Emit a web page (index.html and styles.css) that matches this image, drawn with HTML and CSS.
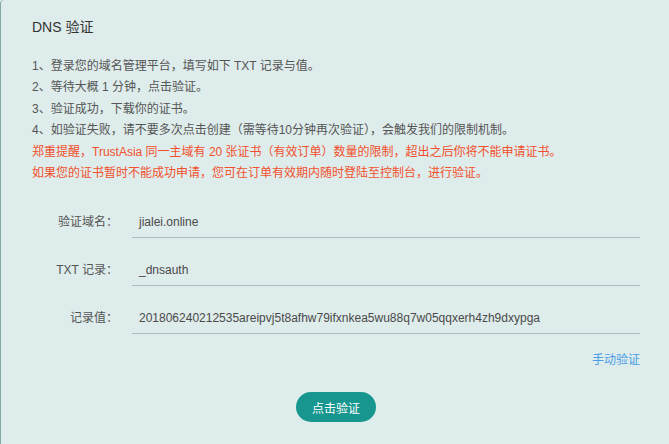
FILE: index.html
```html
<!DOCTYPE html>
<html lang="zh-CN">
<head>
<meta charset="utf-8">
<title>DNS 验证</title>
<link rel="stylesheet" href="styles.css">
</head>
<body>
<div class="panel">
  <h2 class="title">DNS 验证</h2>
  <div class="notes">
    <p>1、登录您的域名管理平台，填写如下 TXT 记录与值。</p>
    <p>2、等待大概 1 分钟，点击验证。</p>
    <p>3、验证成功，下载你的证书。</p>
    <p>4、如验证失败，请不要多次点击创建（需等待10分钟再次验证），会触发我们的限制机制。</p>
    <p class="warn">郑重提醒，TrustAsia 同一主域有 20 张证书（有效订单）数量的限制，超出之后你将不能申请证书。</p>
    <p class="warn">如果您的证书暂时不能成功申请，您可在订单有效期内随时登陆至控制台，进行验证。</p>
  </div>
  <div class="form">
    <div class="row">
      <span class="label">验证域名：</span>
      <span class="field">jialei.online</span>
    </div>
    <div class="row">
      <span class="label">TXT 记录：</span>
      <span class="field">_dnsauth</span>
    </div>
    <div class="row">
      <span class="label">记录值：</span>
      <span class="field">201806240212535areipvj5t8afhw79ifxnkea5wu88q7w05qqxerh4zh9dxypga</span>
    </div>
    <div class="manual"><a class="link" href="#">手动验证</a></div>
    <div class="actions"><button class="btn" type="button">点击验证</button></div>
  </div>
</div>
</body>
</html>
```
FILE: styles.css
```css
html, body {
  margin: 0;
  padding: 0;
  background: #deeceb;
  font-family: "Liberation Sans", "Noto Sans CJK SC", sans-serif;
  color: #555;
}
.panel {
  min-height: 444px;
  box-sizing: border-box;
  border-left: 1px solid #7fa8a5;
  border-top-left-radius: 4px;
  padding: 17px 0 0 31px;
}
.title {
  margin: 0;
  font-size: 14px;
  font-weight: normal;
  line-height: 20px;
  color: #333;
}
.notes {
  margin-top: 19px;
}
.notes p {
  margin: 0;
  font-size: 12px;
  line-height: 21.4px;
  color: #555;
}
.notes .warn {
  color: #f2502c;
}
.form {
  width: 608px;
  margin-top: 28px;
  display: flex;
  flex-direction: column;
  gap: 22px;
  font-size: 12px;
}
.row {
  display: flex;
  align-items: flex-start;
}
.label {
  width: 86px;
  text-align: right;
  line-height: 20px;
  color: #555;
  flex: none;
}
.field {
  margin-left: 14px;
  flex: 1;
  line-height: 20px;
  padding: 0 0 5px 7px;
  border-bottom: 1px solid #a9bfbd;
  color: #4a4a4a;
}
.manual {
  margin-top: -6px;
  text-align: right;
  line-height: 20px;
}
.link {
  color: #4a9ee6;
  text-decoration: none;
}
.actions {
  display: flex;
  justify-content: center;
}
.btn {
  font-family: inherit;
  font-size: 12px;
  color: #fff;
  background: #16968e;
  border: none;
  border-radius: 15px;
  height: 30px;
  padding: 0 16px;
}
```
